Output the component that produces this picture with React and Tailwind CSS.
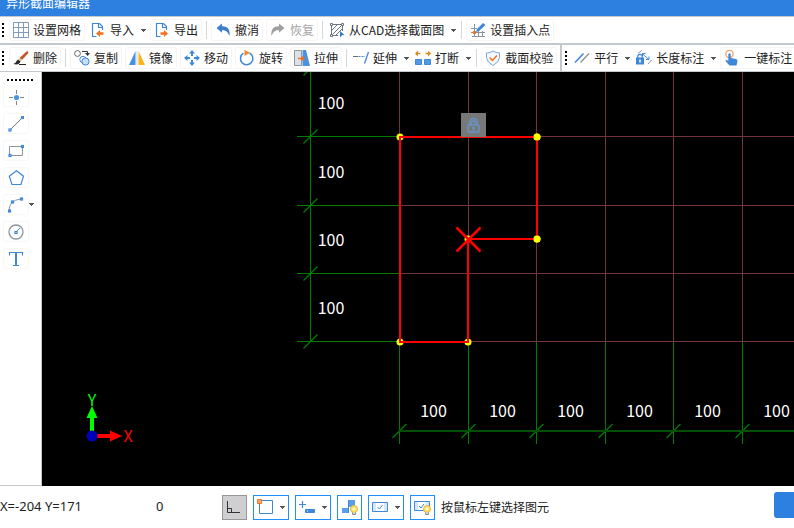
import React from 'react';

const BLUE = '#3f87d9';
const GRAY = '#8b959e';
const ORANGE = '#f37021';

const Icon = ({ children }) => (
  <svg className="size-4 shrink-0" viewBox="0 0 16 16" fill="none" aria-hidden="true">
    {children}
  </svg>
);

const Handle = ({ x, y }) => (
  <rect x={x - 1} y={y - 1} width="2" height="2" fill="#fff" stroke={BLUE} strokeWidth="1.200" />
);

const icons = {
  grid: (
    <Icon>
      <path d="M.5.5h15v15H.5zM5.5.5v15M10.5.5v15M.5 5.5h15M.5 10.5h15" stroke="#7f9cb9" />
    </Icon>
  ),
  importFile: (
    <Icon>
      <path d="M6.500 14.500H2.500V1.500H9.500L12.500 4.500V8M8.500 1.500V5.500H12.500" stroke={BLUE} strokeWidth="1.200" />
      <path d="M6 11.500L10 8V10.300H13.500V12.700H10V15Z" fill={ORANGE} />
    </Icon>
  ),
  exportFile: (
    <Icon>
      <path d="M6.500 14.500H2.500V1.500H9.500L12.500 4.500V8M8.500 1.500V5.500H12.500" stroke={BLUE} strokeWidth="1.200" />
      <path d="M14 11.500L10 8V10.300H6.500V12.700H10V15Z" fill={ORANGE} />
    </Icon>
  ),
  undo: (
    <Icon>
      <path d="M1.500 6L7 1.500V4.200C12 4 15.500 7 14.500 14C12.500 9.500 10.500 8 7 8.200V10.800Z" fill="#3d7fcb" />
    </Icon>
  ),
  redo: (
    <Icon>
      <path d="M14.500 6L9 1.500V4.200C4 4 .5 7 1.500 14C3.500 9.500 5.500 8 9 8.200V10.800Z" fill="#a0a0a0" />
    </Icon>
  ),
  cad: (
    <Icon>
      <path d="M3.500 2.500H12M2.500 3.500V12M13.500 3.500V9M3.500 13.500H9M3 8L8 3M3 13L13 3M7 13L13 7" stroke="#6d767e" />
      <path d="M1.500 1.500h2v2h-2zM12.500 1.500h2v2h-2zM1.500 12.500h2v2h-2z" fill="#fff" stroke="#6d767e" />
      <path d="M11 9L15.500 13L13 13.300L11 15.500Z" fill="#3679cc" />
    </Icon>
  ),
  insertPoint: (
    <Icon>
      <path d="M4.500 2V14.500M1 6.500H7M1 10.500H15M8.500 8V14.500M12.500 9V14.500M2 14.500H15" stroke={GRAY} />
      <path d="M6 10L7 7L13 1L15.500 3L9 9Z" fill={BLUE} />
      <circle cx="4.500" cy="10.500" r="1.800" fill={ORANGE} />
    </Icon>
  ),
  brush: (
    <Icon>
      <path d="M14 1Q16.500 2 14.500 4L9 10L6.500 8Z" fill="#c4572f" />
      <path d="M6.500 8L9 10L7.500 11.500L5 9.500Z" fill="#e7c79b" />
      <path d="M5 9.500L7.500 11.500Q6 15.500 .5 14Q3.500 12.500 3.500 11Z" fill="#26292c" />
      <path d="M6 14.500H13" stroke="#222" />
    </Icon>
  ),
  copy: (
    <Icon>
      <circle cx="3.500" cy="3.500" r="2.900" stroke="#666" />
      <circle cx="9" cy="9.500" r="3.200" fill="#fff" stroke={BLUE} />
      <circle cx="11.500" cy="11.500" r="3.600" fill="#c4def7" stroke={BLUE} />
      <path d="M8 1.500H13.500V3.500" stroke="#333" />
      <path d="M11 3H16L13.500 6Z" fill="#333" />
    </Icon>
  ),
  mirror: (
    <Icon>
      <path d="M6.500 1V15H0Z" fill="#4590df" />
      <path d="M9.500 1V15H16Z" fill="#fbb117" />
      <path d="M8 1V15" stroke="#c3d6ec" />
    </Icon>
  ),
  move: (
    <Icon>
      <path d="M8 0L11 3.500H9V6H7V3.500H5ZM8 16L5 12.500H7V10H9V12.500H11ZM0 8L3.500 5V7H6V9H3.500V11ZM16 8L12.500 11V9H10V7H12.500V5Z" fill={BLUE} />
    </Icon>
  ),
  rotate: (
    <Icon>
      <path d="M10.500 3A6.200 6.200 0 1 1 4.500 3.200" stroke={BLUE} strokeWidth="1.500" />
      <path d="M5.500 0L11 2.800L5.500 6Z" fill="#f08a24" />
    </Icon>
  ),
  stretch: (
    <Icon>
      <path d="M.5 .5H7.500V15.500H.5Z" fill="#dde1e5" stroke="#8f989f" />
      <path d="M8.500 0H12L16 16H8.500Z" fill="#4b93df" />
      <path d="M4 8.500H9" stroke={ORANGE} strokeWidth="1.500" />
      <path d="M7.500 5.500L11 8.500L7.500 11.500Z" fill={ORANGE} />
    </Icon>
  ),
  extend: (
    <Icon>
      <path d="M0 6.500H5" stroke="#666f78" />
      <path d="M5.500 6.500H12" stroke={BLUE} strokeDasharray="2 1" />
      <path d="M15.500 2L11.500 13.500" stroke={BLUE} strokeWidth="1.300" />
    </Icon>
  ),
  breakLine: (
    <Icon>
      <path d="M.5 9.500H6.500V14.500H.5ZM9.500 9.500H15.500V14.500H9.500Z" fill="#5298e3" stroke="#3f87d9" />
      <path d="M0 3.500L3 .5V2.800H5.500V4.200H3V6.500ZM16 3.500L13 .5V2.800H10.500V4.200H13V6.500Z" fill="#d98a1e" />
    </Icon>
  ),
  shield: (
    <Icon>
      <path d="M8 1Q11 3 14.500 3V7.500Q14 12.500 8 15.500Q2 12.500 1.500 7.500V3Q5 3 8 1Z" fill="#f4f9fe" stroke="#78a6d6" />
      <path d="M4.500 7.500L7.500 10.500L12 5.500" stroke={ORANGE} strokeWidth="1.500" />
    </Icon>
  ),
  parallel: (
    <Icon>
      <path d="M1 12.500L9.500 3.500" stroke={BLUE} strokeWidth="1.600" />
      <path d="M6.500 12.500L15 3.500" stroke={GRAY} strokeWidth="1.400" />
    </Icon>
  ),
  length: (
    <Icon>
      <path d="M1.800 8V6.500A2.200 2.200 0 0 1 6.200 6.500V8" stroke={BLUE} strokeWidth="1.200" />
      <path d="M0 7.500H8V14.500H0Z" fill="#3f87d9" />
      <path d="M4 9.500V12.500" stroke="#fff" strokeWidth="1.500" />
      <path d="M2 3.500L5.500 .5M12 14L15.500 10" stroke={GRAY} />
      <path d="M6 3.500L13 9.500M6.500 6V3.500H9.500M13 6.500V9.500H10" stroke={BLUE} />
    </Icon>
  ),
  touch: (
    <Icon>
      <circle cx="5.500" cy="4" r="3.700" stroke="#f4a06a" strokeWidth="1.300" />
      <path d="M4.300 4Q5.500 2.500 6.700 4V8L12 9Q13.500 9.300 13.500 11L12.500 15.500H5.500L1.500 11Q1.500 9.500 3 10L4.300 11Z" fill={BLUE} />
    </Icon>
  ),
  point: (
    <Icon>
      <path d="M8.500 1V5M8.500 12V16M1 8.500H5M12 8.500H16" stroke="#7d8790" />
      <circle cx="8.500" cy="8.500" r="2.600" fill="#4d94e4" />
    </Icon>
  ),
  line: (
    <Icon>
      <path d="M2 14L14 2" stroke="#777" />
      <Handle x={2} y={14} />
      <Handle x={14.500} y={1.500} />
    </Icon>
  ),
  rect: (
    <Icon>
      <path d="M1.500 3.500H14.500V12.500H1.500Z" stroke={GRAY} />
      <Handle x={2} y={12.500} />
      <Handle x={14.500} y={3.500} />
    </Icon>
  ),
  polygon: (
    <Icon>
      <path d="M8.500 .8L15.500 6.200L13 14.500H4L1.300 6.200Z" stroke={BLUE} strokeWidth="1.200" />
    </Icon>
  ),
  arc: (
    <Icon>
      <path d="M1 14Q1 3 13 2" stroke={GRAY} />
      <Handle x={1.500} y={14} />
      <Handle x={4.500} y={5} />
      <Handle x={13.500} y={2} />
    </Icon>
  ),
  circle: (
    <Icon>
      <circle cx="8" cy="8" r="7" stroke={GRAY} strokeWidth="1.300" />
      <path d="M8 8L12 4" stroke={BLUE} />
      <Handle x={8} y={8.500} />
    </Icon>
  ),
  text: (
    <Icon>
      <path d="M1.500 4.500V1.500H14.500V4.500M5 14.500H11" stroke={BLUE} strokeWidth="1.200" />
      <path d="M8 1.500V14.500" stroke={BLUE} strokeWidth="2" />
    </Icon>
  ),
};

const Caret = () => (
  <svg className="w-[5px] h-[3px] shrink-0" viewBox="0 0 5 3" aria-hidden="true">
    <path d="M0 0H5V1H4V2H3V3H2V2H1V1H0Z" fill="#555" />
  </svg>
);

const Grip = () => (
  <div className="w-[7px] h-4 shrink-0 flex flex-col items-center justify-between py-px pr-px">
    <i className="size-0.5 bg-black" />
    <i className="size-0.5 bg-black" />
    <i className="size-0.5 bg-black" />
    <i className="size-0.5 bg-black" />
  </div>
);

const Separator = () => (
  <div className="w-1.5 shrink-0 flex justify-center">
    <div className="w-px h-[18px] bg-[#d5d8da]" />
  </div>
);

const Tool = ({ icon, label, disabled }) => (
  <button
    disabled={disabled}
    className="h-[22px] ml-[2px] mr-px px-[3px] shrink-0 flex items-center gap-1 border border-[#f5f5f5] rounded-[3px] whitespace-nowrap disabled:text-[#a6a6a6]"
  >
    {icons[icon]}
    {label}
  </button>
);

const DropTool = ({ icon, label }) => (
  <button aria-haspopup="menu" className="h-[22px] pl-1 pr-[2px] shrink-0 flex items-center whitespace-nowrap">
    {icons[icon]}
    <span className="ml-1 mr-[7px]">{label}</span>
    <Caret />
  </button>
);

const sideTools = [
  ['point', '点'],
  ['line', '直线'],
  ['rect', '矩形'],
  ['polygon', '多边形'],
  ['arc', '圆弧'],
  ['circle', '圆'],
  ['text', '文字'],
];

// Canvas geometry, one grid cell is 100 mm
const LEFT = 357.5;
const RIGHT = 768.5;
const BASE = 270;
const DIM_X = 268.5;
const DIM_Y = 359;
const columns = [357.5, 426.5, 494.5, 563.5, 631.5, 700.5, 768.5];
const rows = [269.5, 201.5, 133.5, 64.5, -3.5];
const vertices = [
  [358, 65],
  [495, 65],
  [495, 167],
  [426, 167],
  [426, 270],
  [358, 270],
];

const SectionCanvas = () => (
  <svg className="size-full block" role="img" aria-label="截面图">
    <g stroke="#713539">
      {columns.map((x) => (
        <line key={x} x1={x} y1="0" x2={x} y2={BASE} />
      ))}
      {rows.map((y) => (
        <line key={y} x1={LEFT} y1={y} x2={RIGHT} y2={y} />
      ))}
    </g>
    <g stroke="#007c00">
      {columns.map((x) => (
        <g key={x}>
          <line x1={x} y1={BASE} x2={x} y2="372" />
          <line x1={x - 7} y1={DIM_Y + 7} x2={x + 7} y2={DIM_Y - 7} strokeWidth="1.300" />
        </g>
      ))}
      {rows.map((y) => (
        <g key={y}>
          <line x1="255" y1={y} x2={LEFT} y2={y} />
          <line x1={DIM_X - 7} y1={y + 7} x2={DIM_X + 7} y2={y - 7} strokeWidth="1.300" />
        </g>
      ))}
      <line x1={DIM_X} y1="0" x2={DIM_X} y2={BASE} />
      <line x1={LEFT} y1={DIM_Y} x2={RIGHT} y2={DIM_Y} stroke="#005000" strokeWidth="2" />
    </g>
    <g fill="#fff" fontSize="16" textAnchor="middle">
      {columns.slice(0, 6).map((x) => (
        <text key={x} x={x + 34} y="345">100</text>
      ))}
      {rows.slice(0, 4).map((y) => (
        <text key={y} x="289" y={y - 28}>100</text>
      ))}
    </g>

    {vertices.map(([x, y]) => (
      <circle key={`${x}-${y}`} cx={x} cy={y} r="3.500" fill="#ff0" />
    ))}
    <polygon points={vertices.map((v) => v.join(',')).join(' ')} fill="none" stroke="#f00" strokeWidth="2" />
    <circle cx="495" cy="65" r="3.500" fill="#ff0" />
    <circle cx="495" cy="167" r="3.500" fill="#ff0" />
    <path d="M414.500 155.500L438.500 179.500M438.500 155.500L414.500 179.500" stroke="#f00" strokeWidth="2.500" />

    {/* Lock on the top edge */}
    <rect x="419" y="41" width="25" height="24" fill="#787878" />
    <g fill="none" stroke="#6794c8" strokeWidth="1.400">
      <rect x="426" y="53" width="11" height="7" rx="1" />
      <path d="M427.500 53V50.500A4 4 0 0 1 435.500 50.500V53M429.500 53V51A2 2 0 0 1 433.500 51V53M431.500 55V59M430 56H433" />
    </g>

    {/* Axes */}
    <path d="M50 364V346" stroke="#0f0" strokeWidth="4" />
    <path d="M50 334L55.500 346H44.500Z" fill="#0f0" />
    <path d="M50 364H69" stroke="#f00" strokeWidth="4" />
    <path d="M80 364L68 358.500V369.500Z" fill="#f00" />
    <circle cx="50" cy="364" r="5.500" fill="#0000b8" />
    <g fontSize="16" textAnchor="middle">
      <text x="50" y="334" fill="#0f0">Y</text>
      <text x="86" y="370" fill="#f00">X</text>
    </g>
  </svg>
);

const Bulb = () => (
  <>
    <circle cx="16" cy="13" r="3.500" fill="#ffe36b" stroke="#e2b93b" />
    <path d="M14.500 16.500V18.500H17.500V16.500" fill="#ddd" stroke="#8a8a8a" />
    <path d="M15 12L16 14L17 12" stroke="#fff" />
  </>
);

const StatusButton = ({ label, menu, active, children }) => (
  <button
    aria-label={label}
    title={label}
    className={
      active
        ? 'h-[25px] w-[25px] shrink-0 flex items-center bg-[#cfcfd1] border border-[#979797]'
        : menu
          ? 'h-[25px] w-9 shrink-0 flex items-center gap-[3px] bg-white border border-[#1e90ff]'
          : 'h-[25px] w-[25px] shrink-0 flex items-center bg-white border border-[#1e90ff]'
    }
  >
    <svg className="w-[23px] h-[23px] shrink-0" viewBox="0 0 23 23" fill="none" aria-hidden="true">
      {children}
    </svg>
    {menu && <Caret />}
  </button>
);

export default function App() {
  return (
    <div className="h-screen flex flex-col overflow-hidden bg-white text-[#222] text-xs font-['Noto_Sans_CJK_SC',sans-serif]">
      <header className="h-4 shrink-0 px-1.5 overflow-hidden bg-[#2d7fe0] text-white">
        <h1 className="leading-[6px]">异形截面编辑器</h1>
      </header>

      <div role="toolbar" aria-label="设置" className="h-[29px] shrink-0 flex items-center border-t border-b-2 border-[#c3c8cc]">
        <Grip />
        <Tool icon="grid" label="设置网格" />
        <DropTool icon="importFile" label="导入" />
        <Tool icon="exportFile" label="导出" />
        <Separator />
        <Tool icon="undo" label="撤消" />
        <Tool icon="redo" label="恢复" disabled />
        <Separator />
        <DropTool icon="cad" label="从CAD选择截面图" />
        <Separator />
        <Tool icon="insertPoint" label="设置插入点" />
      </div>

      <div className="h-[27px] shrink-0 flex border-b border-[#c3c8cc] overflow-hidden">
        <div role="toolbar" aria-label="编辑" className="flex items-center shrink-0">
          <Grip />
          <Tool icon="brush" label="删除" />
          <Separator />
          <Tool icon="copy" label="复制" />
          <Tool icon="mirror" label="镜像" />
          <Tool icon="move" label="移动" />
          <Tool icon="rotate" label="旋转" />
          <Tool icon="stretch" label="拉伸" />
          <Separator />
          <DropTool icon="extend" label="延伸" />
          <DropTool icon="breakLine" label="打断" />
          <Separator />
          <Tool icon="shield" label="截面校验" />
        </div>
        <div role="toolbar" aria-label="标注" className="flex items-center shrink-0 ml-[2px] pl-px border-l-2 border-[#c3c8cc]">
          <Grip />
          <DropTool icon="parallel" label="平行" />
          <DropTool icon="length" label="长度标注" />
          <Tool icon="touch" label="一键标注" />
        </div>
      </div>

      <main className="flex-1 min-h-0 flex">
        <nav aria-label="绘图" className="w-[42px] shrink-0 flex flex-col border-r border-b border-[#c3c8cc]">
          <div className="flex justify-between w-[26px] ml-[7px] mt-[7px] mb-[5px]">
            {[0, 1, 2, 3, 4, 5, 6].map((n) => (
              <i key={n} className="size-0.5 bg-black" />
            ))}
          </div>
          <div className="flex flex-col gap-1.5 pl-[3px]">
            {sideTools.map(([icon, label]) => (
              <div key={icon} className="flex items-center">
                <button
                  aria-label={label}
                  title={label}
                  className="w-[26px] h-[21px] flex items-center justify-center border border-[#f7f7f7] rounded-[3px]"
                >
                  {icons[icon]}
                </button>
                {icon === 'arc' && <Caret />}
              </div>
            ))}
          </div>
        </nav>
        <div className="flex-1 min-w-0 bg-black">
          <SectionCanvas />
        </div>
      </main>

      <footer className="h-[42px] shrink-0 flex items-center">
        <output className="w-[156px] shrink-0 text-[13px] font-['Noto_Sans',sans-serif]">X=-204 Y=171</output>
        <output className="w-[66px] shrink-0 text-[13px] font-['Noto_Sans',sans-serif]">0</output>
        <div className="flex items-center gap-1.5">
          <StatusButton label="正交" active>
            <path d="M4.500 5V16.500H17M4.500 12.500H8.500V16.500" stroke="#333" />
          </StatusButton>
          <StatusButton label="捕捉" menu>
            <path d="M5.500 4.500H18.500V17.500H5.500Z" stroke={BLUE} />
            <path d="M3.500 3.500H7.500V7.500H3.500Z" fill="#f7a56b" stroke="#e8762c" />
          </StatusButton>
          <StatusButton label="动态输入" menu>
            <path d="M6.500 5V12M3 8.500H10" stroke={BLUE} strokeWidth="1.200" />
            <path d="M9.500 13.500H18.500V16.500H9.500Z" fill={BLUE} stroke={BLUE} />
            <path d="M11 15H12" stroke="#fff" />
          </StatusButton>
          <StatusButton label="显示">
            <path d="M11 4H17V11H11ZM4 12H11V17H4Z" fill="#5a9ee8" />
            <path d="M10.500 4V17" stroke={BLUE} />
            <Bulb />
          </StatusButton>
          <StatusButton label="标注显示" menu>
            <path d="M3.500 6.500H18.500V15.500H3.500Z" fill="#d6e7fa" stroke={BLUE} />
            <path d="M7 7H15V15H7Z" fill="#fff" />
            <path d="M8.500 11L10.500 13L13.500 9" stroke={BLUE} />
          </StatusButton>
          <StatusButton label="标注提示">
            <path d="M3.500 5.500H18.500V14.500H3.500Z" fill="#d6e7fa" stroke={BLUE} />
            <path d="M7 6H15V14H7Z" fill="#fff" />
            <path d="M8 10L10 12L13 8" stroke={BLUE} />
            <Bulb />
          </StatusButton>
          <span className="whitespace-nowrap">按鼠标左键选择图元</span>
        </div>
        <button aria-label="确定" className="ml-auto mb-1 w-5 h-[26px] shrink-0 rounded-l-[3px] bg-[#2d7fe0]" />
      </footer>
    </div>
  );
}
